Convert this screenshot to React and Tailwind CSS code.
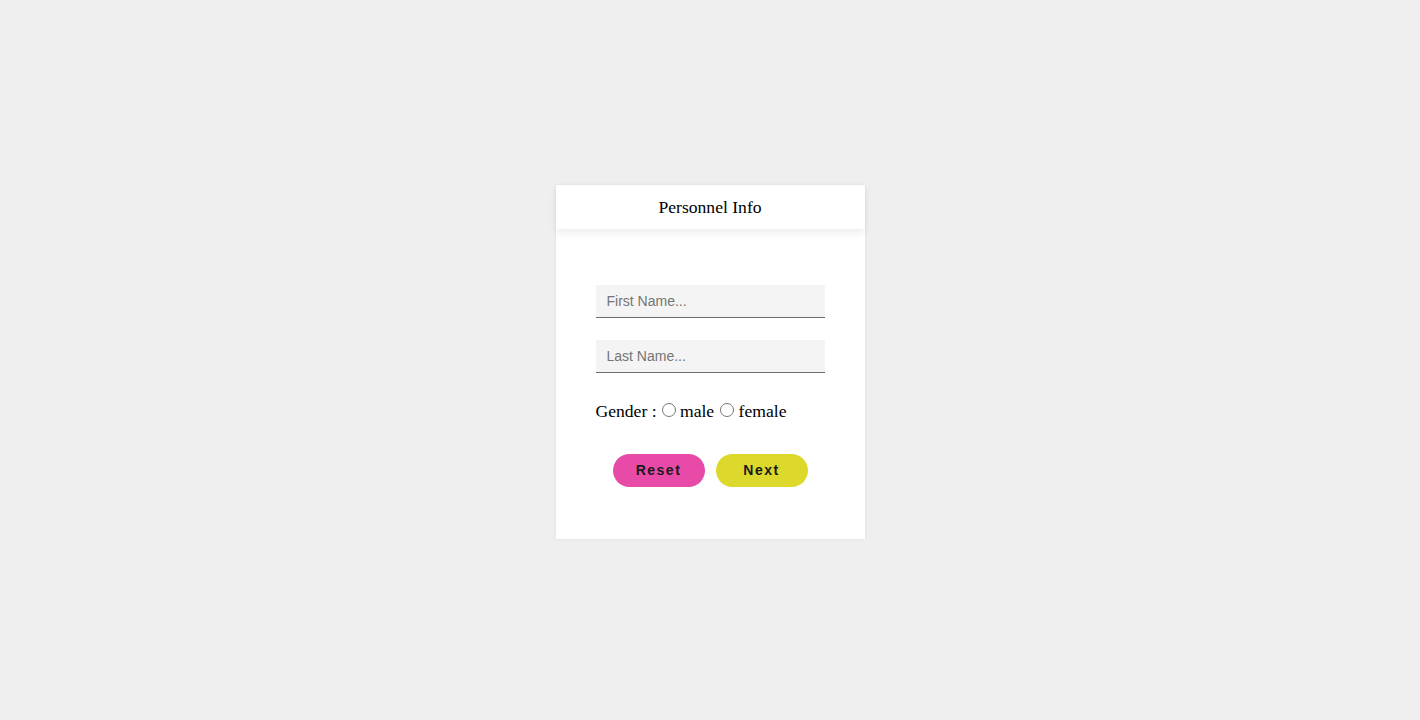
import React, { useState } from "react";

const App = () => {
    const [first, setFirst] = useState("");
    const [last, setLast] = useState("");
    const [gender, setGender] = useState("");

    const reset = () => {
        setFirst("");
        setLast("");
        setGender("");
    };

    return (
        <div className="min-h-screen w-full bg-[#efefef] pt-[185px] font-['Liberation_Serif',serif]">
            <div className="mx-auto w-[309px] bg-white shadow-[0_0_3px_rgba(0,0,0,0.08)]">
                <div className="flex h-[44px] items-center justify-center text-[17.6px] text-black shadow-[0_4px_8px_rgba(0,0,0,0.07)]">
                    Personnel Info
                </div>
                <div className="px-[40px] pt-[56px] pb-[52px]">
                    <input
                        type="text"
                        value={first}
                        onChange={(e) => setFirst(e.target.value)}
                        placeholder="First Name..."
                        className="block h-[33px] w-full border-b border-[#6b6b6b] bg-[#f4f4f4] px-[11px] font-['Liberation_Sans',sans-serif] text-[14px] text-black outline-none placeholder:text-[#757575]"
                    />
                    <input
                        type="text"
                        value={last}
                        onChange={(e) => setLast(e.target.value)}
                        placeholder="Last Name..."
                        className="mt-[22px] block h-[33px] w-full border-b border-[#6b6b6b] bg-[#f4f4f4] px-[11px] font-['Liberation_Sans',sans-serif] text-[14px] text-black outline-none placeholder:text-[#757575]"
                    />
                    <div className="mt-[28px] h-[20px] text-[17.6px] leading-[20px] text-black">
                        Gender :{" "}
                        <input
                            type="radio"
                            name="gender"
                            checked={gender === "male"}
                            onChange={() => setGender("male")}
                            className="mr-[4px] ml-[1px] inline-block h-[14px] w-[14px] align-[0px]"
                        />
                        male{" "}
                        <input
                            type="radio"
                            name="gender"
                            checked={gender === "female"}
                            onChange={() => setGender("female")}
                            className="mr-[5px] ml-[1px] inline-block h-[14px] w-[14px] align-[0px]"
                        />
                        female
                    </div>
                    <div className="mt-[33px] flex justify-center gap-[11px]">
                        <button
                            onClick={reset}
                            className="h-[33px] w-[92px] rounded-full bg-[#e84aa8] font-['Liberation_Sans',sans-serif] text-[14px] font-bold tracking-[1.5px] text-[#1a1a1a]"
                        >
                            Reset
                        </button>
                        <button className="h-[33px] w-[92px] rounded-full bg-[#dcd82c] font-['Liberation_Sans',sans-serif] text-[14px] font-bold tracking-[1.5px] text-[#1a1a1a]">
                            Next
                        </button>
                    </div>
                </div>
            </div>
        </div>
    );
};

export default App;
